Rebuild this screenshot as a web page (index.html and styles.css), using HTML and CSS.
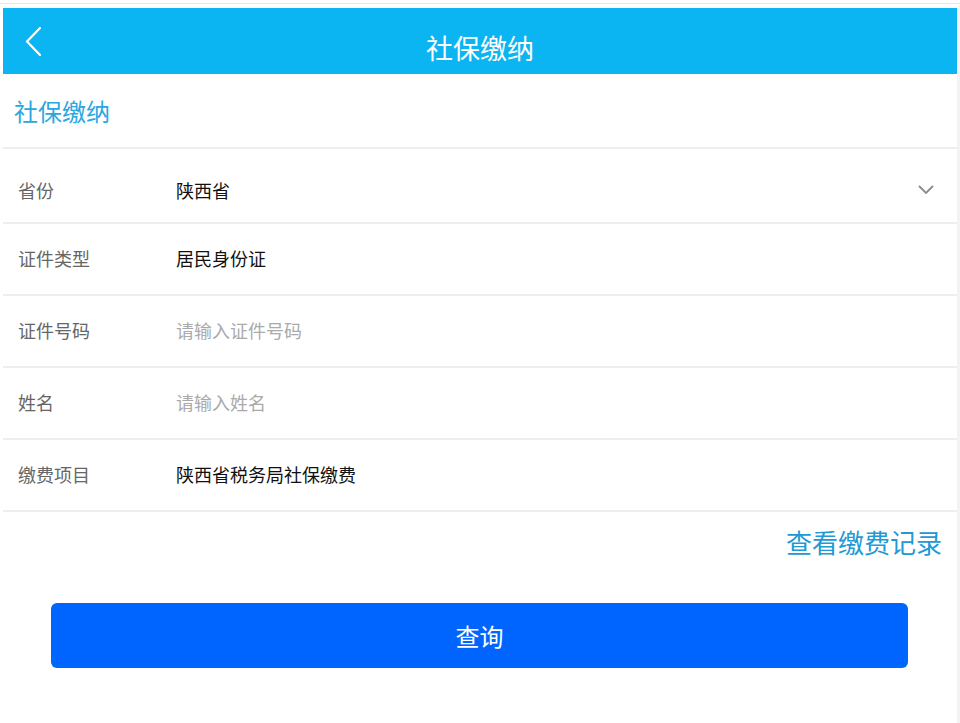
FILE: index.html
```html
<!DOCTYPE html>
<html lang="zh-CN">
<head>
<meta charset="utf-8">
<title>社保缴纳</title>
<link rel="stylesheet" href="styles.css">
</head>
<body>
<div class="topline"></div>
<div class="page">
  <header class="header">
    <span class="back">
      <svg width="16" height="29" viewBox="0 0 16 29"><path d="M15 1 L2 14.5 L15 28" fill="none" stroke="#fff" stroke-width="2.2" stroke-linecap="round" stroke-linejoin="round"/></svg>
    </span>
    <h1 class="title">社保缴纳</h1>
    <span class="spacer"></span>
  </header>
  <div class="section-title">社保缴纳</div>
  <div class="row row-first">
    <span class="label">省份</span>
    <span class="value">陕西省</span>
    <svg class="caret" width="16" height="9" viewBox="0 0 16 9"><path d="M1 1 L8 8 L15 1" fill="none" stroke="#8a8a8a" stroke-width="1.8"/></svg>
  </div>
  <div class="row">
    <span class="label">证件类型</span>
    <span class="value">居民身份证</span>
  </div>
  <div class="row">
    <span class="label">证件号码</span>
    <span class="value placeholder">请输入证件号码</span>
  </div>
  <div class="row">
    <span class="label">姓名</span>
    <span class="value placeholder">请输入姓名</span>
  </div>
  <div class="row">
    <span class="label">缴费项目</span>
    <span class="value">陕西省税务局社保缴费</span>
  </div>
  <div class="record"><a class="record-link">查看缴费记录</a></div>
  <button class="query">查询</button>
</div>
</body>
</html>
```
FILE: styles.css
```css
html, body {
  margin: 0;
  padding: 0;
  background: #fff;
  font-family: "Noto Sans CJK SC", "Noto Sans", "Liberation Sans", sans-serif;
}
.topline {
  margin-top: 3px;
  height: 1px;
  background: #e6e6e6;
}
.page {
  margin: 4px 0 0 3px;
  width: 954px;
  min-height: 715px;
  border-right: 3px solid #f3f3f3;
}
.header {
  height: 66px;
  background: #0bb5f1;
  display: flex;
  align-items: center;
  padding: 0 22px;
}
.back, .spacer {
  width: 16px;
  height: 29px;
  display: block;
}
.back svg { display: block; }
.title {
  flex: 1;
  margin: 0;
  padding-top: 14px;
  text-align: center;
  color: #fff;
  font-size: 27px;
  font-weight: normal;
  line-height: 30px;
}
.section-title {
  height: 75px;
  box-sizing: border-box;
  padding: 0 0 0 11px;
  display: flex;
  align-items: center;
  color: #2aa7df;
  font-size: 24px;
  border-bottom: 2px solid #eeeeee;
}
.row {
  height: 72px;
  box-sizing: border-box;
  display: flex;
  align-items: center;
  padding: 0 23px 2px 15px;
  border-bottom: 2px solid #eeeeee;
  font-size: 18px;
  line-height: 24px;
}
.row-first {
  height: 75px;
  padding-top: 10px;
}
.label {
  width: 158px;
  color: #666;
}
.value {
  flex: 1;
  color: #111;
}
.placeholder {
  color: #aaa;
}
.caret {
  display: block;
}
.record {
  display: flex;
  justify-content: flex-end;
  padding: 15px 15px 0 0;
}
.record-link {
  color: #2199d4;
  font-size: 26px;
  line-height: 30px;
}
.query {
  display: block;
  margin: 46px 49px 0 48px;
  width: 857px;
  height: 65px;
  border: none;
  border-radius: 6px;
  background: #0064ff;
  color: #fff;
  font-family: inherit;
  font-size: 24px;
  line-height: 30px;
  padding: 0;
}
```
